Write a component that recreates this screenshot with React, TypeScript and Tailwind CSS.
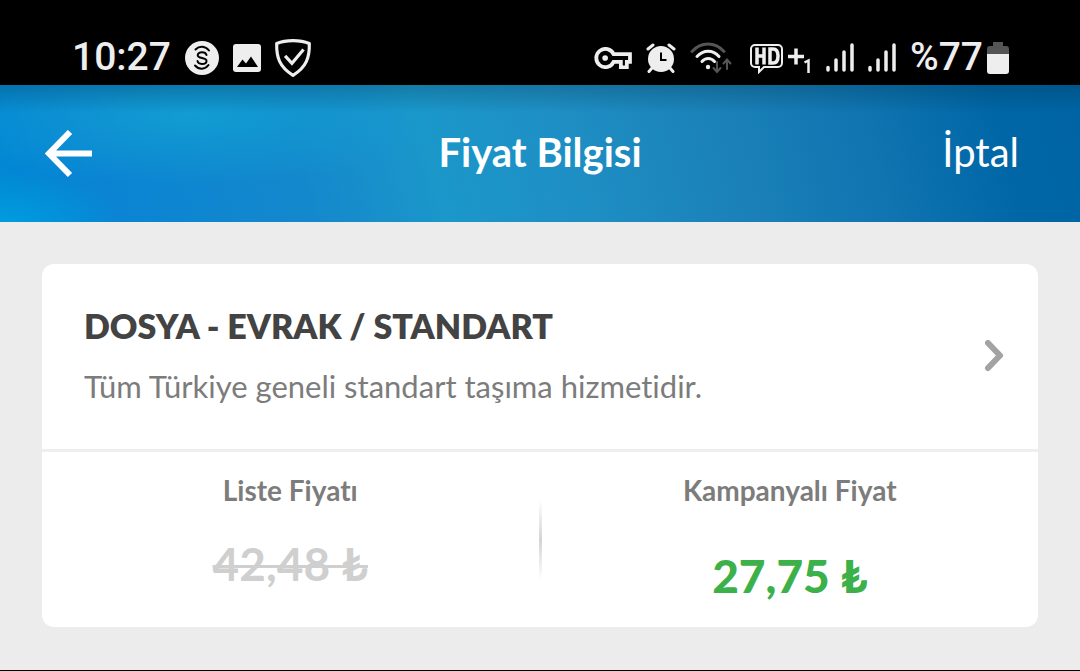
import React from 'react';

const CoinIcon = () => (
  <svg viewBox="0 0 36 36" className="h-9 w-9">
    <circle cx="18" cy="18" r="17" fill="#eee" />
    <g fill="none" stroke="#000" strokeWidth="2" strokeLinecap="round">
      <path d="M22.500 15c-.5-1.800-2-2.700-4.500-2.700s-4.300 1.100-4.300 2.900c0 3.800 8.800 1.800 8.800 5.700 0 1.800-1.800 3-4.500 3-2.500 0-4.100-1-4.500-2.800" />
      <path d="M11.500 9.500c4-4 10-3.500 13.500 1" />
      <path d="M11 25.500c4 4.500 10 4.200 13.500-.5" />
    </g>
  </svg>
);

const ImageIcon = () => (
  <svg viewBox="0 0 28 28" className="h-7 w-7">
    <rect width="28" height="28" rx="3" fill="#eee" />
    <path d="M4 23l5.500-7.500 3.500 4 5-7L25 23z" fill="#000" />
  </svg>
);

const ShieldIcon = () => (
  <svg viewBox="0 0 36 38" className="h-10 w-[38px]" fill="none" stroke="#eee">
    <path d="M18 2.500c5.500 0 11 .9 15.500 2.800.3 13-2.500 22.200-15.500 30.200C5 27.500 2.200 18.300 2.500 5.300 7 3.400 12.500 2.500 18 2.500z" strokeWidth="3" strokeLinejoin="round" />
    <path d="M10.500 17l6.500 7L28 11" strokeWidth="3" />
  </svg>
);

const KeyIcon = () => (
  <svg viewBox="0 5 24 14" className="h-[22px] w-[38px]" fill="none" stroke="#eee">
    <path d="M22.800 9.500H12.400a5.800 5.800 0 1 0 0 5H17v3.500h3.800v-3.500h2z" strokeWidth="2.400" />
    <circle cx="7" cy="12" r="1.800" fill="#eee" stroke="none" />
  </svg>
);

const AlarmIcon = () => (
  <svg viewBox="0 0 30 30" className="h-[30px] w-[30px]" fill="none" stroke="#eee" strokeWidth="3" strokeLinecap="round">
    <circle cx="15" cy="16" r="13" fill="#eee" stroke="none" />
    <path d="M2 6l5-4M28 6l-5-4M6 25l-3 3.500M24 25l3 3.500" />
    <path d="M15 9.500V17h5.500" stroke="#000" strokeWidth="2" strokeLinecap="butt" />
  </svg>
);

const WifiIcon = () => (
  <svg viewBox="0 0 42 32" className="h-8 w-[42px]" fill="none" strokeWidth="3" strokeLinecap="round">
    <path d="M2 9.500C11-.5 25-.5 34 9.500" stroke="#555" />
    <path d="M7 14.500c6.500-7 16-7 22 0M12 19.500c3.500-4 9-4 12.500 0" stroke="#eee" />
    <circle cx="18" cy="25" r="2.200" fill="#eee" />
    <path d="M27 20v9M23.500 26l3.500 4 3.500-4M37 27v-9M33.500 21.500l3.500-4 3.500 4" stroke="#555" strokeWidth="2" />
  </svg>
);

const HdIcon = () => (
  <svg viewBox="0 0 62 32" className="h-8 w-[62px]" fill="none" stroke="#eee">
    <path d="M5 3h23a4 4 0 0 1 4 4v14a4 4 0 0 1-4 4H14l-5 5v-5H5a4 4 0 0 1-4-4V7a4 4 0 0 1 4-4z" strokeWidth="2" />
    <path d="M7 5.500v17M14 5.500v17M7 14h7M20 7v14h3c3.500 0 5-2.500 5-7s-1.500-7-5-7z" strokeWidth="3.500" />
    <path d="M38 14.500h16M46 6.500v16" strokeWidth="3.500" />
    <path d="M54.500 20.500l4-2V31" strokeWidth="2.500" />
  </svg>
);

const SignalIcon = () => (
  <svg viewBox="0 0 28 30" className="h-[30px] w-7" stroke="#eee" strokeWidth="3.500" strokeLinecap="round">
    <path d="M2 24.500v2.500M10 17v10M18 9v18M26 2v25" />
  </svg>
);

const BatteryIcon = () => (
  <svg viewBox="0 0 22 32" className="h-8 w-[22px]">
    <path d="M6 0h10v4h3a3 3 0 0 1 3 3v6H0V7a3 3 0 0 1 3-3h3z" fill="#555" />
    <path d="M0 12h22v17a3 3 0 0 1-3 3H3a3 3 0 0 1-3-3z" fill="#eee" />
  </svg>
);

const StatusBar: React.FC = () => (
  <div className="flex h-[85px] items-center justify-between bg-black pt-[30px] pr-[71px] pl-[72px] font-['Roboto',sans-serif] text-[39px] font-medium text-[#eee]">
    <div className="flex items-center gap-[13px]">
      <span>10:27</span>
      <CoinIcon />
      <ImageIcon />
      <ShieldIcon />
    </div>
    <div className="flex items-center gap-[14px]">
      <KeyIcon />
      <AlarmIcon />
      <WifiIcon />
      <div className="flex items-center gap-[14px] pl-1">
        <HdIcon />
        <SignalIcon />
        <SignalIcon />
      </div>
      <div className="flex items-center gap-1">
        <span>%77</span>
        <BatteryIcon />
      </div>
    </div>
  </div>
);

const Header: React.FC = () => (
  <header className="grid h-[137px] grid-cols-[1fr_auto_1fr] items-center bg-[linear-gradient(to_bottom,rgba(0,40,60,0.25),transparent_20%),radial-gradient(ellipse_260px_70px_at_190px_30px,#119cd2,transparent),radial-gradient(ellipse_120px_50px_at_0px_137px,#009cde,transparent),linear-gradient(75deg,#0088d4_0%,#0a84d3_10%,#1488cc_28%,#1b97ca_40%,#1e8fc4_52%,#1a80b7_68%,#0f74b0_80%,#0066a6_92%,#0064a4_100%)] px-[45px] text-[40px] leading-11 text-white">
    <button type="button" aria-label="Geri" className="justify-self-start">
      <svg viewBox="0 0 48 48" className="h-12 w-12" fill="none" stroke="#fff" strokeWidth="6">
        <path d="M25 2L4 23.500 25 45M5 23.500h42" />
      </svg>
    </button>
    <h1 className="pb-1 font-bold">Fiyat Bilgisi</h1>
    <button type="button" className="justify-self-end pr-4 pb-1">İptal</button>
  </header>
);

interface PriceProps {
  label: string;
  children: React.ReactNode;
}

const Price: React.FC<PriceProps> = ({ label, children }) => (
  <div className="flex flex-1 flex-col items-center self-stretch pt-5">
    <h3 className="text-[28px] leading-9 font-bold text-[#7c7c7c]">{label}</h3>
    {children}
  </div>
);

export default function App() {
  return (
    <div className="min-h-screen border-b border-black bg-[#ececec] font-['Lato',sans-serif] [font-variant-ligatures:none]">
      <StatusBar />
      <Header />
      <main className="p-[42px]">
        <section className="rounded-xl bg-white">
          <button type="button" className="flex w-full items-center justify-between border-b-3 border-[#eee] pt-10 pr-[34px] pb-[41px] pl-[42px] text-left">
            <span className="flex flex-col gap-4">
              <strong className="text-[34px] leading-11 font-extrabold text-[#434343]">DOSYA - EVRAK / STANDART</strong>
              <span className="text-[31px] leading-11 text-[#7c7c7c]">Tüm Türkiye geneli standart taşıma hizmetidir.</span>
            </span>
            <svg viewBox="0 0 20 32" className="h-8 w-5" fill="none" stroke="#a3a3a3" strokeWidth="6" strokeLinecap="round" strokeLinejoin="round">
              <path d="M4 3l12 12.500L4 28" />
            </svg>
          </button>
          <div className="flex h-[175px] items-center">
            <Price label="Liste Fiyatı">
              <s className="mt-7 text-[46px] leading-[56px] font-bold text-[#cfcfcf] decoration-3">42,48 ₺</s>
            </Price>
            <div className="h-20 w-[3px] bg-linear-to-b from-transparent via-[#d4d4d4] to-transparent" />
            <Price label="Kampanyalı Fiyat">
              <strong className="mt-10 text-[46px] leading-[56px] font-black text-[#3cb049]">27,75 ₺</strong>
            </Price>
          </div>
        </section>
      </main>
    </div>
  );
}
